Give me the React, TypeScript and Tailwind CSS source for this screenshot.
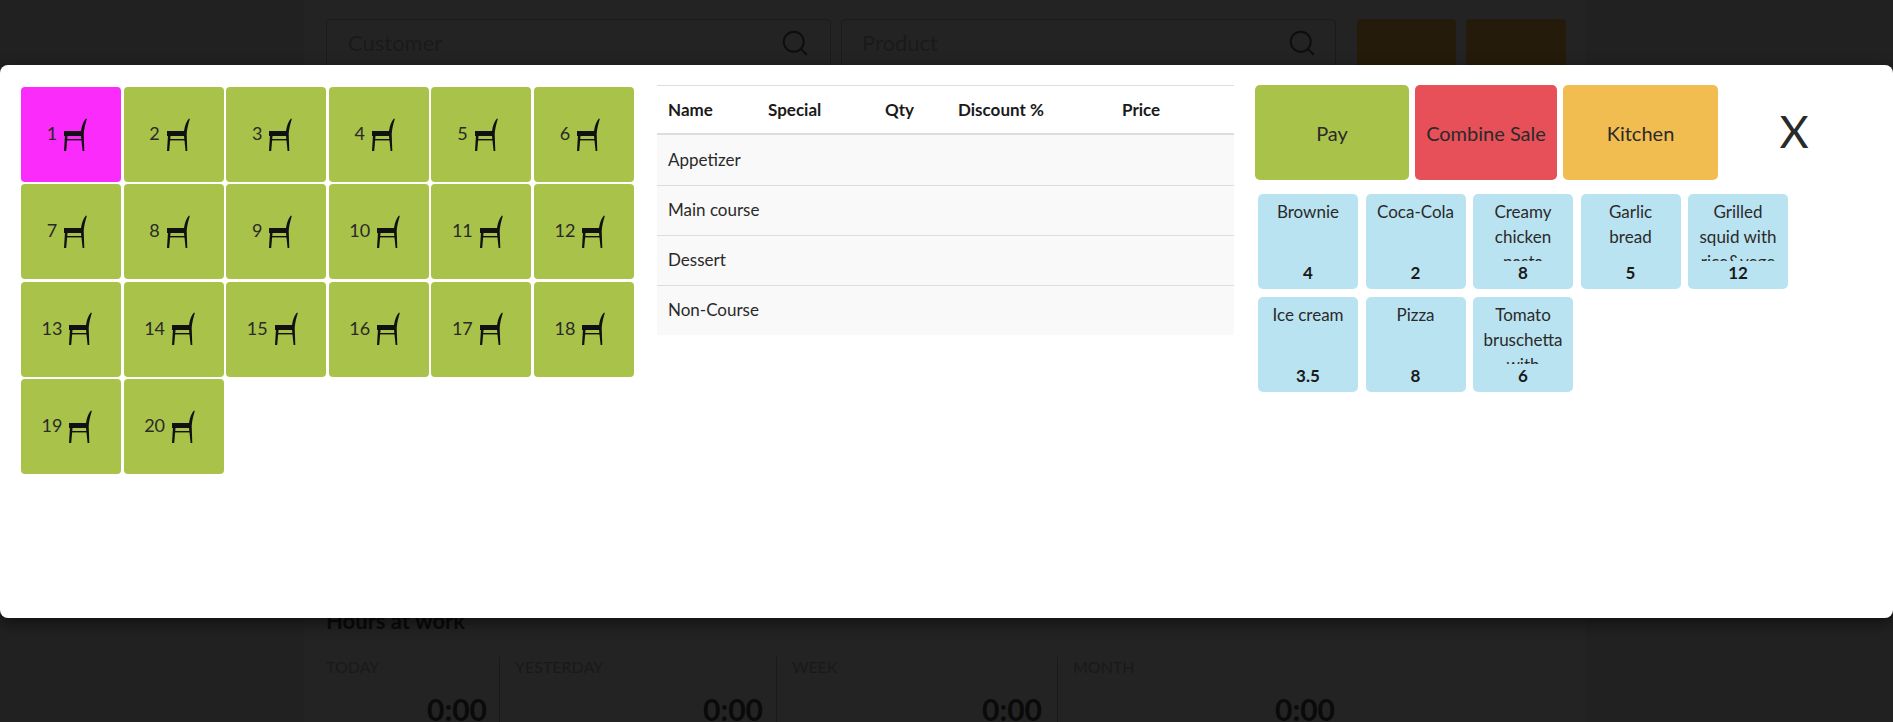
import React from "react";
import { Search } from "lucide-react";

const FONT = "font-['Lato','Open_Sans',sans-serif]";

const SEATS = Array.from({ length: 20 }, (_, i) => i + 1);

const COURSES = ["Appetizer", "Main course", "Dessert", "Non-Course"];

const PRODUCTS = [
  { name: "Brownie", price: "4" },
  { name: "Coca-Cola", price: "2" },
  { name: "Creamy chicken pasta", price: "8" },
  { name: "Garlic bread", price: "5" },
  { name: "Grilled squid with rice&vege", price: "12" },
  { name: "Ice cream", price: "3.5" },
  { name: "Pizza", price: "8" },
  { name: "Tomato bruschetta with", price: "6" },
];

const HOURS = [
  { label: "TODAY", w: "w-[174px]", pl: "pl-0", pr: "pr-[12px]" },
  { label: "YESTERDAY", w: "w-[277px]", pl: "pl-[15px]", pr: "pr-[13px]" },
  { label: "WEEK", w: "w-[281px]", pl: "pl-[15px]", pr: "pr-[15px]" },
  { label: "MONTH", w: "w-[278px]", pl: "pl-[15px]", pr: "pr-[1px]" },
];

function Chair() {
  return (
    <svg width="24" height="34" viewBox="0 0 24 34" className="shrink-0" fill="#111">
      <path d="M1 13 L18 13 C19 7 20.5 3 23 0.5 L23.8 1 C22.3 6 21 11 20.7 16 L21.3 33 L19.6 33 L18 18 L1 18 Z" />
      <path d="M2 17 L4.6 17 L3.2 33 L1 33 Z" />
      <rect x="3" y="21" width="16" height="1.4" />
    </svg>
  );
}

function DimmedPage() {
  return (
    <div className="h-[722px] bg-[#212121] overflow-hidden">
      <div className="w-[1282px] h-full ml-[304px] bg-[#232323] pt-[19px] pl-[22px]">
        <div className="flex">
          <div className="w-[505px] h-[70px] mr-[10px] border border-[#1b1b1b] rounded flex justify-between pl-[21px] pr-[22px] pt-[6px]">
            <span className="text-[22px] text-[#1a1a1a]">Customer</span>
            <Search size={30} strokeWidth={1.5} className="text-[#0d0d0d] -mr-[2px] mt-[2px]" />
          </div>
          <div className="w-[495px] h-[70px] mr-[21px] border border-[#1b1b1b] rounded flex justify-between px-[20px] pt-[6px]">
            <span className="text-[22px] text-[#1a1a1a]">Product</span>
            <Search size={30} strokeWidth={1.5} className="text-[#0d0d0d] -mr-[2px] mt-[2px]" />
          </div>
          <div className="w-[99px] h-[70px] mr-[10px] rounded bg-[#241b0b]" />
          <div className="w-[100px] h-[70px] rounded bg-[#241b0b]" />
        </div>
        <h2 className="mt-[517px] text-[22px] leading-[30px] font-bold text-[#0a0a0a]">Hours at work</h2>
        <div className="flex mt-[21px] h-[80px]">
          {HOURS.map((h, i) => (
            <div
              key={h.label}
              className={`${h.w} ${h.pl} ${h.pr} ${i < 3 ? "border-r border-[#1a1a1a]" : ""} flex flex-col`}
            >
              <span className="text-[16px] leading-[20px] text-[#191919]">{h.label}</span>
              <span className="mt-[14px] text-right text-[30px] leading-[36px] font-bold text-[#0a0a0a]">0:00</span>
            </div>
          ))}
        </div>
      </div>
    </div>
  );
}

export default function App() {
  return (
    <div className={`relative h-[722px] overflow-hidden text-[#2a2a2a] ${FONT}`}>
      <DimmedPage />
      <div className="absolute left-0 right-0 top-[65px] h-[553px] bg-white rounded-[8px] shadow-[0_5px_15px_rgba(0,0,0,0.5)] flex">
        <div className="w-[636px] ml-[21px] pt-[22px] shrink-0">
          <div className="flex flex-wrap gap-x-[2.6px] gap-y-[2.4px] w-[620px]">
            {SEATS.map((n) => (
              <button
                key={n}
                className={`w-[100px] h-[95px] rounded-[4px] flex items-center justify-center gap-[6px] pr-[8px] text-[18px] ${
                  n === 1 ? "bg-[#fb2cfb]" : "bg-[#a9c249]"
                }`}
              >
                <span className="-mt-[2px]">{n}</span>
                <Chair />
              </button>
            ))}
          </div>
        </div>

        <div className="w-[577px] pt-[20px] shrink-0">
          <div className="border-t border-[#ddd] border-b-2 border-b-[#ddd] h-[50px] flex items-center font-bold text-[17px] leading-none pl-[11px] text-[#1a1a1a]">
            <span className="w-[100px]">Name</span>
            <span className="w-[117px]">Special</span>
            <span className="w-[73px]">Qty</span>
            <span className="w-[164px]">Discount %</span>
            <span>Price</span>
          </div>
          {COURSES.map((c, i) => (
            <div
              key={c}
              className={`h-[50px] bg-[#f9f9f9] flex items-center pl-[11px] text-[17px] pb-[1px] ${
                i > 0 ? "border-t border-[#ddd]" : ""
              }`}
            >
              {c}
            </div>
          ))}
        </div>

        <div className="ml-[21px] pt-[20px] flex-1">
          <div className="flex items-start text-[20px]">
            <button className="w-[154px] h-[95px] rounded-[5px] bg-[#a9c249]">Pay</button>
            <button className="ml-[6px] w-[142px] h-[95px] rounded-[5px] bg-[#e75058]">Combine Sale</button>
            <button className="ml-[6px] w-[155px] h-[95px] rounded-[5px] bg-[#f2bd50]">Kitchen</button>
            <button className="ml-[51px] w-[50px] h-[92px] text-[45px] leading-[92px]">X</button>
          </div>
          <div className="mt-[14px] ml-[3px] flex flex-wrap gap-x-[7.5px] gap-y-[8px] w-[540px]">
            {PRODUCTS.map((p) => (
              <div key={p.name} className="w-[100px] h-[95px] rounded-[5px] bg-[#bae3f1] pt-[5px] px-[8px] text-center text-[17px] leading-[25px]">
                <div className="h-[62px] -mx-[6px] px-[6px] overflow-hidden">{p.name}</div>
                <div className="-mt-[1px] font-bold text-[#1a1a1a]">{p.price}</div>
              </div>
            ))}
          </div>
        </div>
      </div>
    </div>
  );
}
